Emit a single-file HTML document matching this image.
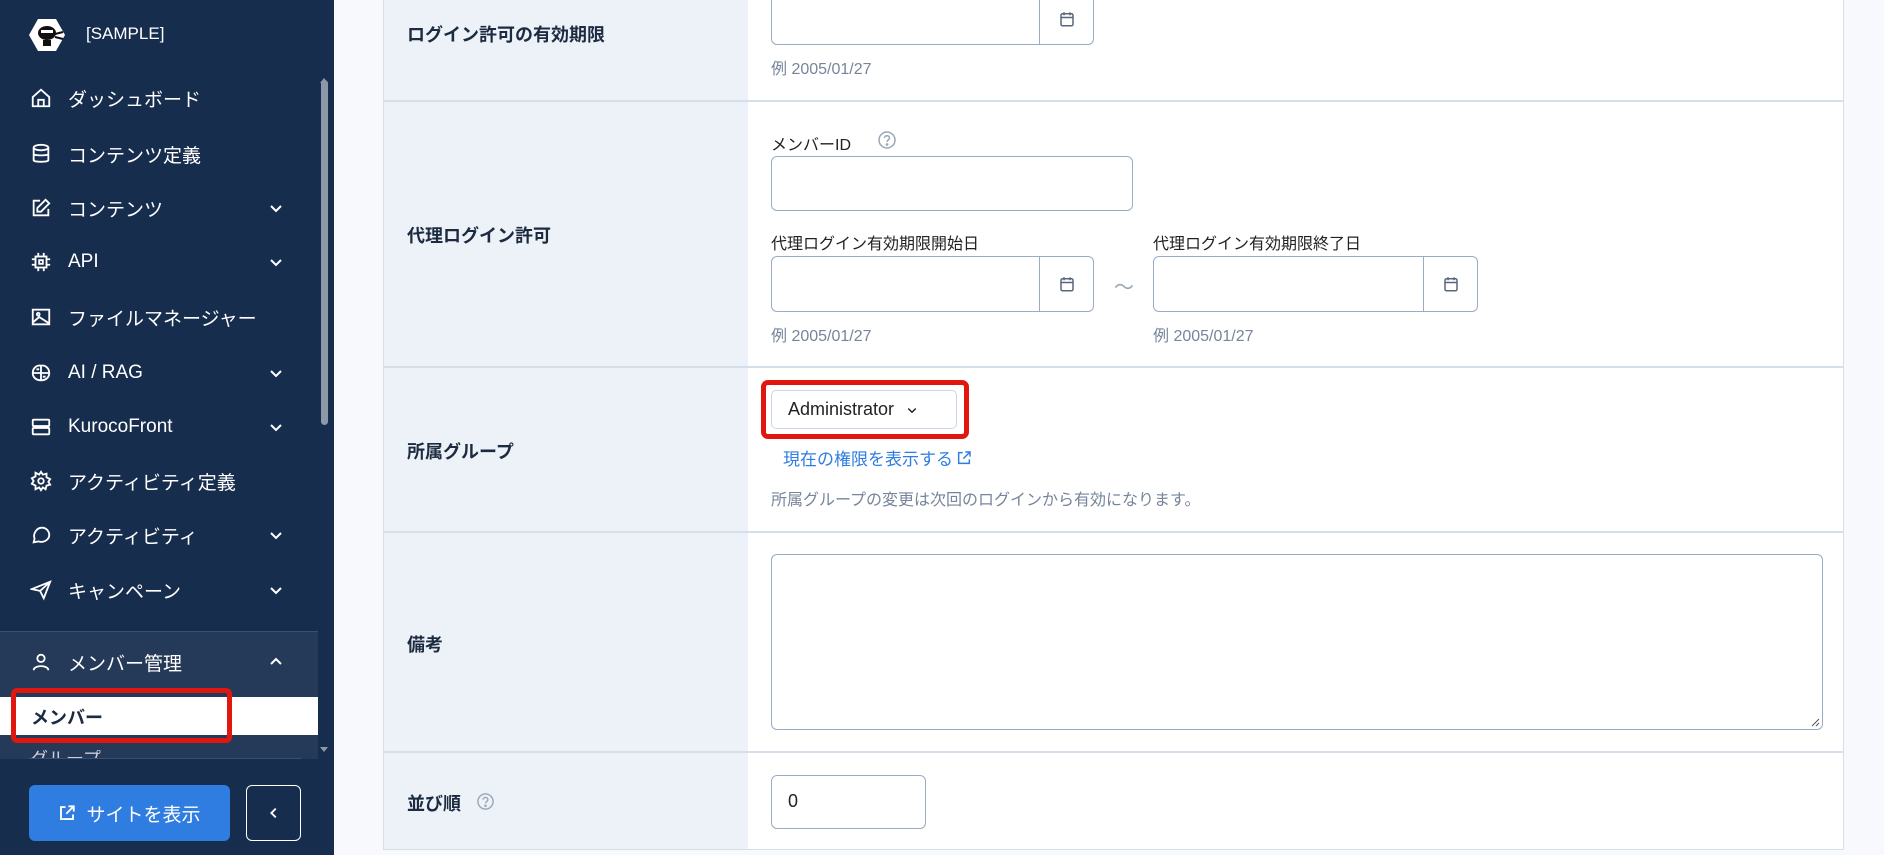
<!DOCTYPE html>
<html><head><meta charset="utf-8"><style>
*{box-sizing:border-box;margin:0;padding:0}
body{width:1884px;height:855px;overflow:hidden;background:#f7f9fc;font-family:"Liberation Sans","Noto Sans CJK JP",sans-serif;position:relative}
.a{position:absolute}
#sb{left:0;top:0;width:334px;height:855px;background:#172d4d;color:#fff}
.it{position:absolute;left:0;width:318px;height:40px;display:flex;align-items:center;font-size:19px;color:#fff}
.it svg{position:absolute;left:30px;width:22px;height:22px}
.it span{position:absolute;left:68px}
.it .ch{position:absolute;left:268px;width:16px;height:16px}
.lbl{position:absolute;left:407px;font-size:18px;font-weight:bold;color:#1c2b3f}
.inp{position:absolute;background:#fff;border:1.5px solid #9aabc4;border-radius:6px}
.cal{position:absolute;top:0;bottom:0;border-left:1.5px solid #9aabc4;display:flex;align-items:center;justify-content:center}
.hint{position:absolute;font-size:16px;color:#76859a}
.sub{position:absolute;font-size:16px;color:#222}
.hr{position:absolute;left:383px;width:1461px;height:1.5px;background:#d5dfea}
</style></head><body>
<div id="sb" class="a">
 <svg class="a" style="left:28px;top:18px" width="38" height="34" viewBox="0 0 38 34"><polygon points="10,1 28,1 37,17 28,33 10,33 1,17" fill="#fff"/><ellipse cx="19" cy="15" rx="9" ry="7" fill="#111"/><rect x="13" y="12" width="12" height="3" fill="#fff"/><rect x="15" y="22" width="8" height="6" fill="#111"/><path d="M27 16 L35 14 M27 19 L35 21" stroke="#111" stroke-width="2"/></svg>
 <div class="a" style="left:86px;top:24px;font-size:17px;color:#fff">[SAMPLE]</div>
 <div class="a" style="left:321px;top:80px;width:7px;height:345px;background:#8c98a8;border-radius:4px"></div>
 <div class="a" style="left:320px;top:74px;border:4px solid transparent;border-bottom:5px solid #8c98a8"></div>
 <div class="a" style="left:320px;top:747px;border:4px solid transparent;border-top:5px solid #8c98a8"></div>

 <div class="it" style="top:78px"><svg viewBox="0 0 24 24" fill="none" stroke="#fff" stroke-width="2"><path d="M3 11 L12 3 L21 11 V21 H3 Z M9 21 V14 H15 V21"/></svg><span>ダッシュボード</span></div>
 <div class="it" style="top:134px"><svg viewBox="0 0 24 24" fill="none" stroke="#fff" stroke-width="2"><ellipse cx="12" cy="5" rx="8" ry="3"/><path d="M4 5 V19 C4 21 20 21 20 19 V5 M4 12 C4 14 20 14 20 12"/></svg><span>コンテンツ定義</span></div>
 <div class="it" style="top:188px"><svg viewBox="0 0 24 24" fill="none" stroke="#fff" stroke-width="2"><path d="M11 4 H4 V20 H20 V13 M17 3 L21 7 L12 16 H8 V12 Z"/></svg><span>コンテンツ</span><svg class="ch" viewBox="0 0 16 16" fill="none" stroke="#fff" stroke-width="2"><path d="M3 6 L8 11 L13 6"/></svg></div>
 <div class="it" style="top:242px"><svg viewBox="0 0 24 24" fill="none" stroke="#fff" stroke-width="2"><rect x="6" y="6" width="12" height="12"/><rect x="10" y="10" width="4" height="4"/><path d="M2 9H6M2 15H6M18 9H22M18 15H22M9 2V6M15 2V6M9 18V22M15 18V22"/></svg><span>API</span><svg class="ch" viewBox="0 0 16 16" fill="none" stroke="#fff" stroke-width="2"><path d="M3 6 L8 11 L13 6"/></svg></div>
 <div class="it" style="top:297px"><svg viewBox="0 0 24 24" fill="none" stroke="#fff" stroke-width="2"><rect x="3" y="4" width="18" height="16"/><circle cx="9" cy="9" r="1.5"/><path d="M3 18 L10 12 L21 19"/></svg><span>ファイルマネージャー</span></div>
 <div class="it" style="top:353px"><svg viewBox="0 0 24 24" fill="none" stroke="#fff" stroke-width="2"><path d="M12 4 C7 3 3 7 3 12 C3 17 7 20 12 20 C17 20 21 17 21 12 C21 7 17 3 12 4 M12 4 V20 M3 12 H21 M7 8 H10 M14 16 H17"/></svg><span>AI / RAG</span><svg class="ch" viewBox="0 0 16 16" fill="none" stroke="#fff" stroke-width="2"><path d="M3 6 L8 11 L13 6"/></svg></div>
 <div class="it" style="top:407px"><svg viewBox="0 0 24 24" fill="none" stroke="#fff" stroke-width="2"><rect x="3" y="4" width="18" height="7" rx="1"/><rect x="3" y="13" width="18" height="7" rx="1"/></svg><span>KurocoFront</span><svg class="ch" viewBox="0 0 16 16" fill="none" stroke="#fff" stroke-width="2"><path d="M3 6 L8 11 L13 6"/></svg></div>
 <div class="it" style="top:461px"><svg viewBox="0 0 24 24" fill="none" stroke="#fff" stroke-width="2"><circle cx="12" cy="12" r="3"/><path d="M12 2 L14 5 L18 4 L18 8 L22 10 L20 13 L22 16 L18 17 L17 21 L14 19 L12 22 L10 19 L6 21 L6 17 L2 15 L4 12 L2 9 L6 7 L6 3 L10 5 Z"/></svg><span>アクティビティ定義</span></div>
 <div class="it" style="top:515px"><svg viewBox="0 0 24 24" fill="none" stroke="#fff" stroke-width="2"><path d="M4 20 L5 16 C3 11 7 4 13 4 C18 4 21 8 21 12 C21 17 15 21 9 19 Z"/></svg><span>アクティビティ</span><svg class="ch" viewBox="0 0 16 16" fill="none" stroke="#fff" stroke-width="2"><path d="M3 6 L8 11 L13 6"/></svg></div>
 <div class="it" style="top:570px"><svg viewBox="0 0 24 24" fill="none" stroke="#fff" stroke-width="2"><path d="M2 11 L22 3 L15 21 L11 13 Z M11 13 L22 3"/></svg><span>キャンペーン</span><svg class="ch" viewBox="0 0 16 16" fill="none" stroke="#fff" stroke-width="2"><path d="M3 6 L8 11 L13 6"/></svg></div>

 <div class="a" style="left:0;top:631px;width:318px;height:128px;background:#243a58;border-top:1px solid #3a5070"></div>
 <div class="it" style="top:642px"><svg viewBox="0 0 24 24" fill="none" stroke="#fff" stroke-width="2"><circle cx="12" cy="8" r="4"/><path d="M4 21 C4 15 20 15 20 21"/></svg><span>メンバー管理</span><svg class="ch" viewBox="0 0 16 16" fill="none" stroke="#fff" stroke-width="2"><path d="M3 10 L8 5 L13 10"/></svg></div>
 <div class="a" style="left:0;top:697px;width:318px;height:38px;background:#fff"></div>
 <div class="a" style="left:31px;top:704px;font-size:18px;font-weight:bold;color:#1c2b3f">メンバー</div>
 <div class="a" style="left:11px;top:688px;width:221px;height:55px;border:5px solid #e0170f;border-radius:6px"></div>
 <div class="a" style="left:30px;top:750px;width:270px;height:9px;overflow:hidden;font-size:18px;color:#ccd;line-height:18px">グループ</div>
 <div class="a" style="left:29px;top:758px;width:272px;height:1px;background:#3a5070"></div>

 <div class="a" style="left:29px;top:785px;width:201px;height:56px;background:#2f7de1;border-radius:6px;color:#fff;font-size:19px;display:flex;align-items:center;justify-content:center;gap:10px"><svg width="18" height="18" viewBox="0 0 24 24" fill="none" stroke="#fff" stroke-width="2.5"><path d="M10 4H4V20H20V14M14 3H21V10M21 3L11 13"/></svg>サイトを表示</div>
 <div class="a" style="left:246px;top:785px;width:55px;height:56px;border:1.5px solid #fff;border-radius:6px;display:flex;align-items:center;justify-content:center"><svg width="14" height="14" viewBox="0 0 16 16" fill="none" stroke="#fff" stroke-width="2.2"><path d="M10 3 L5 8 L10 13"/></svg></div>
</div>

<div class="a" style="left:383px;top:0;width:1461px;height:850px;background:#fff;border-left:1.5px solid #d5dfea;border-right:1.5px solid #d5dfea;border-bottom:1.5px solid #d5dfea"></div>
<div class="a" style="left:384px;top:0;width:364px;height:849px;background:#edf2f9"></div>
<div class="hr" style="top:100px"></div>
<div class="hr" style="top:366px"></div>
<div class="hr" style="top:531px"></div>
<div class="hr" style="top:751px"></div>

<div class="lbl" style="top:21px">ログイン許可の有効期限</div>
<div class="inp" style="left:771px;top:-8px;width:323px;height:53px"><div class="cal" style="left:267px;right:0"><svg width="18" height="18" viewBox="0 0 24 24" fill="none" stroke="#58677c" stroke-width="2"><rect x="4" y="5" width="16" height="16" rx="2"/><path d="M4 10H20M8 3V7M16 3V7"/></svg></div></div>
<div class="hint" style="left:771px;top:55px">例 2005/01/27</div>

<div class="lbl" style="top:222px">代理ログイン許可</div>
<div class="sub" style="left:771px;top:131px">メンバーID</div>
<svg class="a" style="left:877px;top:130px" width="20" height="20" viewBox="0 0 20 20" fill="none" stroke="#9aa6b6" stroke-width="1.5"><circle cx="10" cy="10" r="8"/><path d="M7.5 8 C7.5 5 12.5 5 12.5 8 C12.5 10 10 10 10 12"/><circle cx="10" cy="14.5" r=".6" fill="#9aa6b6"/></svg>
<div class="inp" style="left:771px;top:156px;width:362px;height:55px"></div>
<div class="sub" style="left:771px;top:230px">代理ログイン有効期限開始日</div>
<div class="sub" style="left:1153px;top:230px">代理ログイン有効期限終了日</div>
<div class="inp" style="left:771px;top:256px;width:323px;height:56px"><div class="cal" style="left:267px;right:0"><svg width="18" height="18" viewBox="0 0 24 24" fill="none" stroke="#58677c" stroke-width="2"><rect x="4" y="5" width="16" height="16" rx="2"/><path d="M4 10H20M8 3V7M16 3V7"/></svg></div></div>
<div class="a" style="left:1114px;top:271px;font-size:20px;color:#9aa6b6">～</div>
<div class="inp" style="left:1153px;top:256px;width:325px;height:56px"><div class="cal" style="left:269px;right:0"><svg width="18" height="18" viewBox="0 0 24 24" fill="none" stroke="#58677c" stroke-width="2"><rect x="4" y="5" width="16" height="16" rx="2"/><path d="M4 10H20M8 3V7M16 3V7"/></svg></div></div>
<div class="hint" style="left:771px;top:322px">例 2005/01/27</div>
<div class="hint" style="left:1153px;top:322px">例 2005/01/27</div>

<div class="lbl" style="top:438px">所属グループ</div>
<div class="a" style="left:771px;top:390px;width:186px;height:39px;border:1.5px solid #ccd6e2;border-radius:5px;background:#fff;font-size:18px;color:#222;display:flex;align-items:center;padding-left:16px">Administrator<svg style="margin-left:12px" width="12" height="12" viewBox="0 0 16 16" fill="none" stroke="#222" stroke-width="2"><path d="M3 6 L8 11 L13 6"/></svg></div>
<div class="a" style="left:761px;top:380px;width:208px;height:59px;border:5px solid #e0170f;border-radius:7px"></div>
<div class="a" style="left:783px;top:445px;font-size:17px;color:#2f7de1">現在の権限を表示する<svg width="16" height="16" viewBox="0 0 24 24" fill="none" stroke="#2f7de1" stroke-width="2.2" style="margin-left:3px;vertical-align:-1px"><path d="M10 4H4V20H20V14M14 3H21V10M21 3L11 13"/></svg></div>
<div class="hint" style="left:771px;top:486px">所属グループの変更は次回のログインから有効になります。</div>

<div class="lbl" style="top:631px">備考</div>
<div class="inp" style="left:771px;top:554px;width:1052px;height:176px"><svg class="a" style="right:2px;bottom:2px" width="10" height="10" viewBox="0 0 10 10" stroke="#555" stroke-width="1"><path d="M9 2L2 9M9 6L6 9"/></svg></div>

<div class="lbl" style="top:790px">並び順</div>
<svg class="a" style="left:476px;top:792px" width="19" height="19" viewBox="0 0 20 20" fill="none" stroke="#9aa6b6" stroke-width="1.5"><circle cx="10" cy="10" r="8"/><path d="M7.5 8 C7.5 5 12.5 5 12.5 8 C12.5 10 10 10 10 12"/><circle cx="10" cy="14.5" r=".6" fill="#9aa6b6"/></svg>
<div class="inp" style="left:771px;top:775px;width:155px;height:54px;font-size:18px;color:#222;padding:15px 16px">0</div>
</body></html>
